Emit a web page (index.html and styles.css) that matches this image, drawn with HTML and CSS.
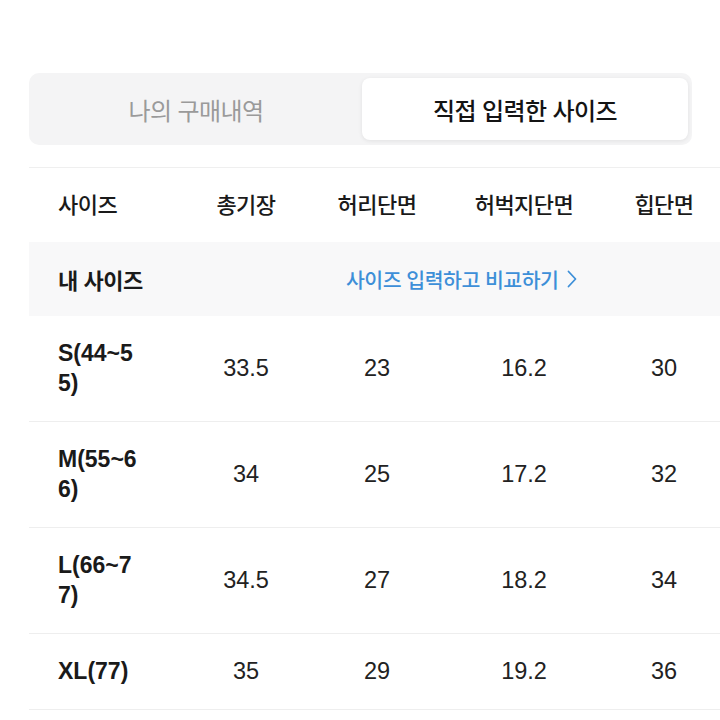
FILE: index.html
```html
<!DOCTYPE html>
<html lang="ko">
<head>
<meta charset="utf-8">
<link rel="stylesheet" href="styles.css">
</head>
<body>
<div class="page">
  <div class="tabs">
    <div class="tab">나의 구매내역</div>
    <div class="tab active">직접 입력한 사이즈</div>
  </div>
  <div class="table">
    <div class="row head">
      <div class="cell first">사이즈</div>
      <div class="cell">총기장</div>
      <div class="cell">허리단면</div>
      <div class="cell">허벅지단면</div>
      <div class="cell">힙단면</div>
    </div>
    <div class="row mine">
      <div class="cell first label">내 사이즈</div>
      <div class="cell link">사이즈 입력하고 비교하기 <svg class="chev" width="12" height="20" viewBox="0 0 12 20"><path d="M2.5 2.5 L9.5 10 L2.5 17.5" fill="none" stroke="#3d8fd8" stroke-width="1.8" stroke-linecap="round" stroke-linejoin="round"/></svg></div>
    </div>
    <div class="row data">
      <div class="cell first size"><span>S(44~55)</span></div>
      <div class="cell num">33.5</div>
      <div class="cell num">23</div>
      <div class="cell num">16.2</div>
      <div class="cell num">30</div>
    </div>
    <div class="row data">
      <div class="cell first size"><span>M(55~66)</span></div>
      <div class="cell num">34</div>
      <div class="cell num">25</div>
      <div class="cell num">17.2</div>
      <div class="cell num">32</div>
    </div>
    <div class="row data">
      <div class="cell first size"><span>L(66~77)</span></div>
      <div class="cell num">34.5</div>
      <div class="cell num">27</div>
      <div class="cell num">18.2</div>
      <div class="cell num">34</div>
    </div>
    <div class="row data">
      <div class="cell first size"><span>XL(77)</span></div>
      <div class="cell num">35</div>
      <div class="cell num">29</div>
      <div class="cell num">19.2</div>
      <div class="cell num">36</div>
    </div>
  </div>
</div>
</body>
</html>
```
FILE: styles.css
```css
html, body {
  margin: 0;
  padding: 0;
  background: #ffffff;
  overflow: hidden;
}
body {
  width: 720px;
  height: 720px;
  font-family: "Noto Sans CJK KR", "Noto Sans", sans-serif;
  color: #1a1a1a;
}
.page {
  padding: 73px 0 0 29px;
}
.tabs {
  width: 663px;
  height: 72px;
  box-sizing: border-box;
  background: #f4f4f5;
  border-radius: 10px;
  padding: 5px 4px;
  display: flex;
}
.tab {
  flex: 1;
  display: flex;
  align-items: center;
  justify-content: center;
  font-size: 24px;
  color: #9a9a9a;
  letter-spacing: -0.6px;
}
.tab.active {
  background: #ffffff;
  color: #141414;
  font-weight: 500;
  border-radius: 8px;
  box-shadow: 0 1px 4px rgba(0, 0, 0, 0.08);
  margin-left: 3px;
}
.table {
  margin-top: 22px;
  width: 720px;
  border-top: 1px solid #efefef;
}
.row {
  display: grid;
  grid-template-columns: 157px 120px 142px 152px 128px;
  align-items: center;
}
.row.head {
  height: 70px;
  padding-bottom: 4px;
}
.row.mine {
  height: 74px;
  background: #f8f8f9;
  grid-template-columns: 157px 1fr;
}
.row.data {
  padding: 22px 0 23px;
  border-bottom: 1px solid #eeeeee;
}
.cell {
  font-size: 22px;
  text-align: center;
  line-height: 30px;
  font-weight: 500;
  letter-spacing: -0.5px;
}
.cell.first {
  text-align: left;
  padding-left: 29px;
}
.cell.label {
  font-weight: 700;
}
.cell.link {
  text-align: left;
  padding-left: 160px;
  color: #3d8fd8;
  font-weight: 500;
  font-size: 20.5px;
  display: flex;
  align-items: center;
  gap: 8px;
}
.chev {
  display: block;
}
.size span {
  display: block;
  width: 85px;
  word-break: break-all;
  font-family: "Liberation Sans", Arial, sans-serif;
  font-weight: 700;
  font-size: 23px;
  letter-spacing: 0;
  color: #1a1a1a;
}
.num {
  font-family: "Liberation Sans", "Roboto", sans-serif;
  font-weight: 400;
  font-size: 23.5px;
  letter-spacing: 0;
  color: #222;
}
```
